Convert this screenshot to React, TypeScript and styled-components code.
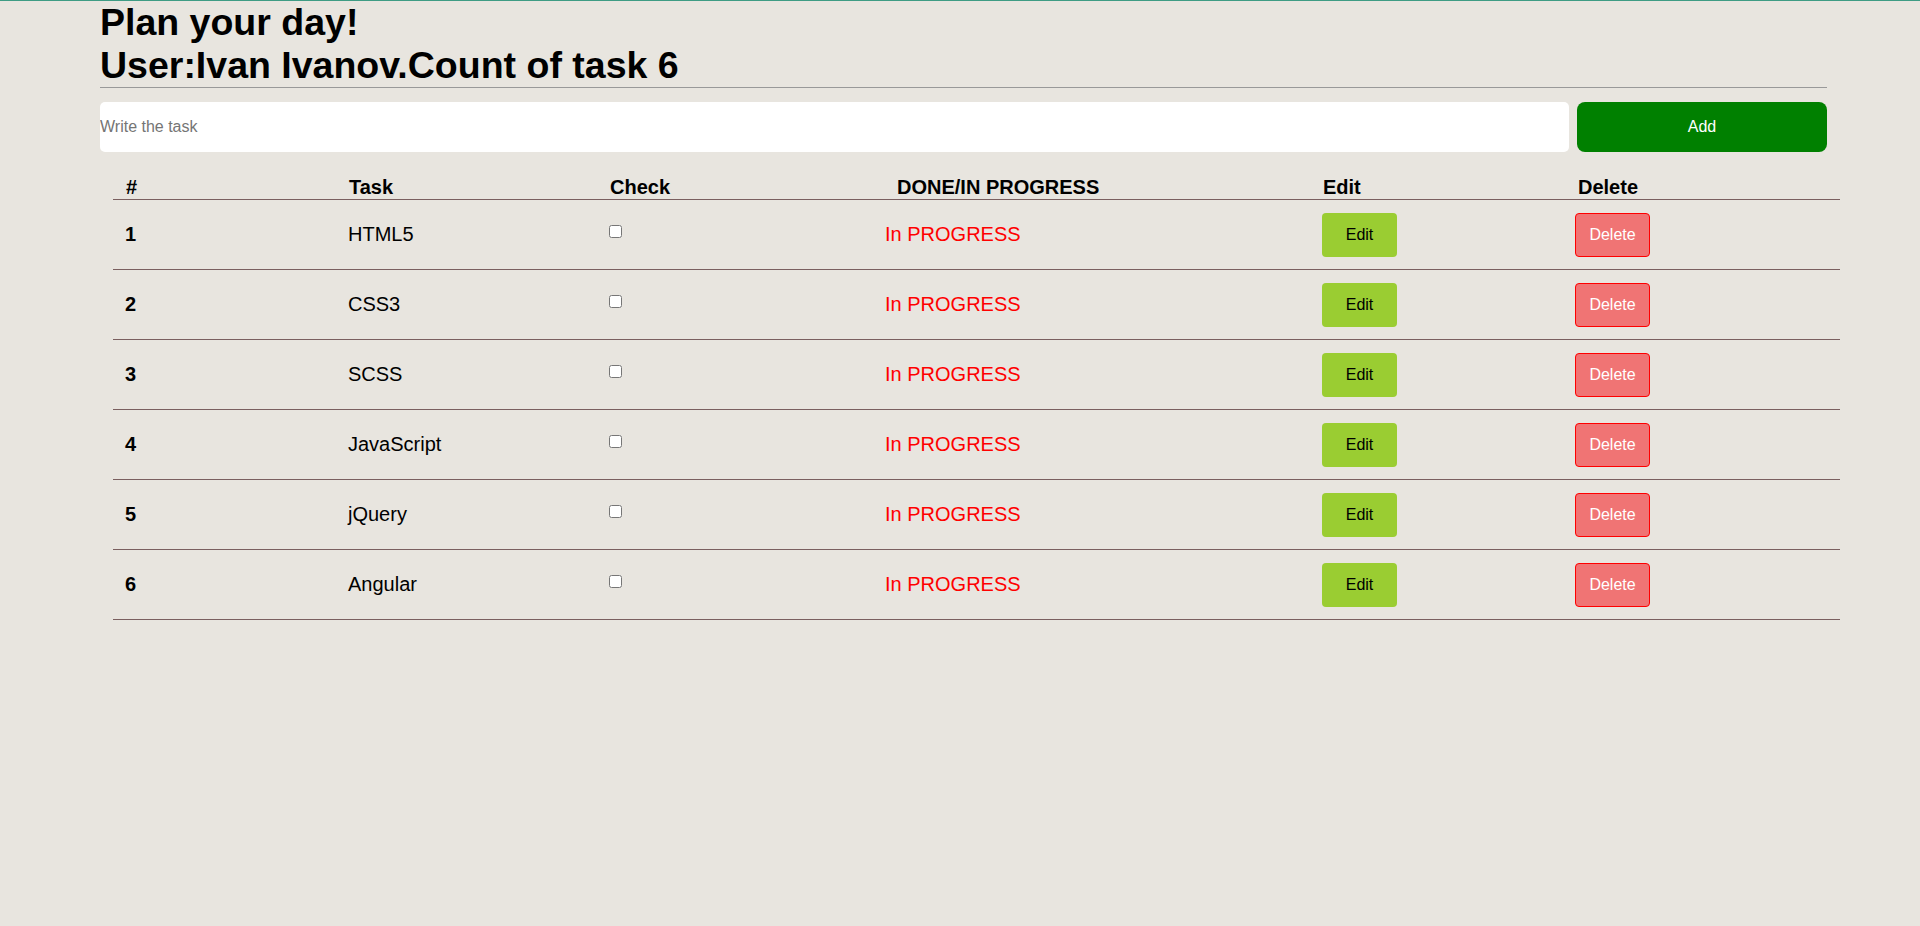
import styled, { createGlobalStyle } from "styled-components";

const tasks = ["HTML5", "CSS3", "SCSS", "JavaScript", "jQuery", "Angular"];

const App = () => {
  return (
    <Page>
      <GlobalStyle />
      <Container>
        <Title>
          Plan your day!
          <br />
          User:Ivan Ivanov.Count of task {tasks.length}
        </Title>

        <Form>
          <TaskInput placeholder="Write the task" />
          <AddButton>Add</AddButton>
        </Form>
      </Container>

      <Table>
        <HeadRow>
          <HeadCell>#</HeadCell>
          <HeadCell>Task</HeadCell>
          <HeadCell>Check</HeadCell>
          <HeadCell $indent={24}>DONE/IN PROGRESS</HeadCell>
          <HeadCell>Edit</HeadCell>
          <HeadCell $indent={15}>Delete</HeadCell>
        </HeadRow>

        {tasks.map((task, i) => (
          <Row key={task}>
            <NumCell>{i + 1}</NumCell>
            <Cell>{task}</Cell>
            <Cell>
              <CheckBox type="checkbox" />
            </Cell>
            <StatusCell>In PROGRESS</StatusCell>
            <Cell>
              <EditButton>Edit</EditButton>
            </Cell>
            <Cell>
              <DeleteButton>Delete</DeleteButton>
            </Cell>
          </Row>
        ))}
      </Table>
    </Page>
  );
};

export default App;

const GlobalStyle = createGlobalStyle`
  html, body {
    margin: 0;
    padding: 0;
    background: #e8e5df;
  }

  body {
    font-family: "Liberation Sans", Arial, sans-serif;
    color: #000;
  }
`;

const Page = styled.div`
  min-height: 100vh;
  box-sizing: border-box;
  border-top: 1px solid #3e9c84;
`;

const Container = styled.div`
  width: 1727px;
  margin-left: 100px;
`;

const Title = styled.h1`
  margin: 0;
  font-size: 37.5px;
  font-weight: bold;
  line-height: 43px;
  border-bottom: 1px solid #999;
`;

const Form = styled.div`
  display: flex;
  gap: 8px;
  margin-top: 14px;
`;

const TaskInput = styled.input`
  flex: 1;
  height: 50px;
  box-sizing: border-box;
  border: none;
  border-radius: 5px;
  background: #fff;
  padding: 0;
  font-family: "Liberation Sans", Arial, sans-serif;
  font-size: 16px;
  outline: none;

  &::placeholder {
    color: #757575;
  }
`;

const AddButton = styled.button`
  width: 250px;
  height: 50px;
  border: none;
  border-radius: 8px;
  background: #008000;
  color: #fff;
  font-family: "Liberation Sans", Arial, sans-serif;
  font-size: 16px;
  cursor: pointer;
`;

const Table = styled.div`
  width: 1727px;
  margin: 23px 0 0 113px;
`;

const columns = "223px 261px 276px 437px 253px 277px";

const HeadRow = styled.div`
  display: grid;
  grid-template-columns: ${columns};
  line-height: 24px;
  border-bottom: 1px solid #7a5f5f;
`;

const HeadCell = styled.div<{ $indent?: number }>`
  padding-left: ${(p) => p.$indent ?? 13}px;
  font-size: 20px;
  font-weight: bold;
`;

const Row = styled.div`
  display: grid;
  grid-template-columns: ${columns};
  height: 69px;
  align-items: center;
  border-bottom: 1px solid #7a5f5f;
`;

const Cell = styled.div`
  display: flex;
  align-items: center;
  padding-left: 12px;
  font-size: 20px;
`;

const NumCell = styled(Cell)`
  font-weight: bold;
`;

const StatusCell = styled(Cell)`
  color: #ff0000;
`;

const CheckBox = styled.input`
  width: 13px;
  height: 13px;
  margin: 0 0 6px 0;
`;

const Button = styled.button`
  width: 75px;
  height: 44px;
  box-sizing: border-box;
  border-radius: 4px;
  font-family: "Liberation Sans", Arial, sans-serif;
  font-size: 16px;
  cursor: pointer;
`;

const EditButton = styled(Button)`
  border: none;
  background: #9acd32;
  color: #000;
`;

const DeleteButton = styled(Button)`
  border: 1px solid #ff0000;
  background: #f07474;
  color: #fff;
`;
